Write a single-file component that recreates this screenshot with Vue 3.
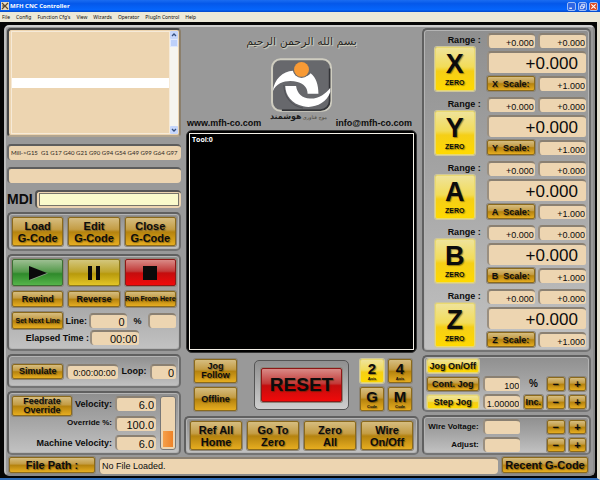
<script setup>
import { reactive, ref } from 'vue'

const menus = ['File', 'Config', "Function Cfg's", 'View', 'Wizards', 'Operator', 'PlugIn Control', 'Help']
const modalCodes = 'Mill->G15  G1 G17 G40 G21 G90 G94 G54 G49 G99 G64 G97'
const mdi = ref('')

const axes = reactive(
  ['X', 'Y', 'A', 'B', 'Z'].map((name) => ({
    name,
    low: '+0.000',
    high: '+0.000',
    position: '+0.000',
    scale: '+1.000',
  }))
)

const run = reactive({ line: '0', percent: '', elapsed: '00:00', simulated: '0:00:00:00', loop: '0' })
const feed = reactive({ velocity: '6.0', override: '100.0', machine: '6.0', level: 34 })
const jog = reactive({ continuous: '100', step: '1.00000' })
const wire = reactive({ voltage: '', adjust: '' })

const modes = [
  { key: '2', caption: 'Axis', active: true },
  { key: '4', caption: 'Axis', active: false },
  { key: 'G', caption: 'Code', active: false },
  { key: 'M', caption: 'Code', active: false },
]
const actions = [
  ['Ref All', 'Home'],
  ['Go To', 'Zero'],
  ['Zero', 'All'],
  ['Wire', 'On/Off'],
]
const files = ['Load', 'Edit', 'Close']

function zero(axis) {
  axis.position = '+0.000'
}
</script>

<template>
  <div class="window">
    <header class="titlebar">
      <svg class="app-icon" viewBox="0 0 8 8" aria-hidden="true">
        <rect width="8" height="8" fill="#e9dcc0" />
        <path d="M1 1l6 6M7 1L1 7M1 4h3" stroke="#5b4a30" stroke-width="1.2" />
      </svg>
      <h1 class="title">MFH CNC Controller</h1>
      <div class="window-buttons">
        <button class="win" type="button" aria-label="Minimize">
          <svg viewBox="0 0 8 8"><path d="M1.5 6h3" stroke="#fff" stroke-width="1.4" /></svg>
        </button>
        <button class="win" type="button" aria-label="Restore">
          <svg viewBox="0 0 8 8"><path d="M3 3V1.5h3.500V5H5M1.500 3.500H5v3H1.500z" fill="none" stroke="#fff" stroke-width="0.900" /></svg>
        </button>
        <button class="win close" type="button" aria-label="Close">
          <svg viewBox="0 0 8 8"><path d="M1.500 1.500l5 5M6.500 1.500l-5 5" stroke="#fff" stroke-width="1.300" /></svg>
        </button>
      </div>
    </header>
    <nav class="menubar">
      <button v-for="m in menus" :key="m" type="button" class="menu">{{ m }}</button>
    </nav>

    <div class="frame">
      <div class="console">
        <main class="columns">
          <section class="column left">
            <div class="listing">
              <div class="code">
                <div class="current-line"></div>
              </div>
              <div class="scrollbar">
                <button class="arrow" type="button" aria-label="Scroll up">
                  <svg viewBox="0 0 8 8"><path d="M2 5l2-2 2 2" fill="none" stroke="#35507f" stroke-width="1.300" /></svg>
                </button>
                <div class="thumb"></div>
                <button class="arrow down" type="button" aria-label="Scroll down">
                  <svg viewBox="0 0 8 8"><path d="M2 3l2 2 2-2" fill="none" stroke="#35507f" stroke-width="1.300" /></svg>
                </button>
              </div>
            </div>
            <div class="strip">{{ modalCodes }}</div>
            <div class="strip"></div>
            <div class="mdi">
              <label for="mdi">MDI</label>
              <div class="mdi-box"><input id="mdi" v-model="mdi" type="text" /></div>
            </div>

            <div class="panels">
              <div class="panel three">
                <button v-for="f in files" :key="f" type="button" class="btn tall">{{ f }}<br />G-Code</button>
              </div>

              <div class="panel run">
                <div class="three big">
                  <button type="button" class="btn green" aria-label="Cycle start">
                    <svg viewBox="0 0 20 16"><path d="M2 2l18 6.500-18 7z" fill="#8aa387" /><path d="M1 1l18 7-18 7z" fill="#0a0a0a" /></svg>
                  </button>
                  <button type="button" class="btn yellow" aria-label="Pause">
                    <svg viewBox="0 0 20 16"><path d="M4 1h4v14H4zM12 1h4v14h-4z" fill="#0a0a0a" /></svg>
                  </button>
                  <button type="button" class="btn red" aria-label="Stop">
                    <svg viewBox="0 0 20 16"><path d="M3 1h14v14H3z" fill="#0a0a0a" /></svg>
                  </button>
                </div>
                <div class="three small">
                  <button type="button" class="btn">Rewind</button>
                  <button type="button" class="btn">Reverse</button>
                  <button type="button" class="btn long">Run From Here</button>
                </div>
                <div class="line-row">
                  <button type="button" class="btn long">Set Next Line</button>
                  <label for="line">Line:</label>
                  <input id="line" v-model="run.line" class="field mid" type="text" />
                  <label for="percent" class="percent">%</label>
                  <input id="percent" v-model="run.percent" class="field" type="text" />
                </div>
                <div class="elapsed-row">
                  <label for="elapsed">Elapsed Time :</label>
                  <input id="elapsed" v-model="run.elapsed" class="field mid" type="text" readonly />
                </div>
              </div>

              <div class="panel sim">
                <button type="button" class="btn">Simulate</button>
                <input v-model="run.simulated" class="field" type="text" aria-label="Simulated time" readonly />
                <label for="loop">Loop:</label>
                <input id="loop" v-model="run.loop" class="field mid" type="text" />
              </div>

              <div class="panel feed">
                <div class="feed-rows">
                  <div class="feed-row">
                    <button type="button" class="btn feedrate">Feedrate<br />Override</button>
                    <label for="velocity">Velocity:</label>
                    <input id="velocity" v-model="feed.velocity" class="field mid" type="text" />
                  </div>
                  <div class="feed-row">
                    <label for="override" class="minor">Override %:</label>
                    <input id="override" v-model="feed.override" class="field mid" type="text" />
                  </div>
                  <div class="feed-row">
                    <label for="machine">Machine Velocity:</label>
                    <input id="machine" v-model="feed.machine" class="field mid" type="text" />
                  </div>
                </div>
                <div class="gauge" role="meter" aria-label="Feedrate" :aria-valuenow="feed.level">
                  <div class="level" :style="{ height: feed.level + '%' }"></div>
                </div>
              </div>
            </div>
          </section>

          <section class="column center">
            <div class="brand">
              <p class="calligraphy" lang="ar" dir="rtl">بسم الله الرحمن الرحيم</p>
              <svg class="logo" viewBox="0 0 180 158" role="img" aria-label="MFH">
                <rect x="3" y="3" width="174" height="152" rx="25" fill="#67686c" stroke="#cfcdc0" stroke-width="6" />
                <path d="M173 30v96a27 27 0 0 1-27 27H32" fill="none" stroke="#333438" stroke-width="5" />
                <path d="M5 98C10 62 34 38 65 37c8 22 38 24 52 7 16 12 23 34 23 61h-32c0-18-10-29-30-35C54 63 18 67 5 98z" fill="#fff" />
                <path d="M42 82h32c3 22 18 36 41 37 26 1 46-14 60-32v13c-12 34-48 49-80 42-34-8-52-31-53-60z" fill="#fff" />
                <path d="M38 79c0 34 21 61 56 68" fill="none" stroke="#505156" stroke-width="3" />
                <circle cx="90" cy="33" r="25" fill="#67686c" />
                <circle cx="90" cy="33" r="22" fill="#f89a35" />
              </svg>
              <div class="contacts">
                <a href="#">www.mfh-co.com</a>
                <p class="caption" lang="fa" dir="rtl"><small>موج فناوری</small><b>هوشمند</b></p>
                <a href="#">info@mfh-co.com</a>
              </div>
            </div>

            <div class="screen"><div class="viewport">Tool:0</div></div>

            <div class="controls">
              <div class="stack">
                <button type="button" class="btn">Jog<br />Follow</button>
                <button type="button" class="btn">Offline</button>
              </div>
              <div class="reset-panel">
                <button type="button" class="btn red reset">RESET</button>
              </div>
              <div class="modes">
                <button v-for="m in modes" :key="m.key" type="button" class="btn mode" :class="{ lit: m.active }">
                  {{ m.key }}<small>{{ m.caption }}</small>
                </button>
              </div>
            </div>

            <div class="panel four">
              <button v-for="a in actions" :key="a.join()" type="button" class="btn tall">{{ a[0] }}<br />{{ a[1] }}</button>
            </div>
          </section>

          <section class="column right">
            <div class="panel axes">
              <div v-for="a in axes" :key="a.name" class="axis">
                <div class="axis-side">
                  <span class="range">Range :</span>
                  <button type="button" class="btn lit zero" @click="zero(a)">{{ a.name }}<small>ZERO</small></button>
                </div>
                <div class="readouts">
                  <input v-model="a.low" class="field low" type="text" :aria-label="a.name + ' range low'" />
                  <input v-model="a.high" class="field low" type="text" :aria-label="a.name + ' range high'" />
                  <input v-model="a.position" class="field dro" type="text" :aria-label="a.name + ' position'" />
                  <button type="button" class="btn scale">{{ a.name }}&nbsp; Scale:</button>
                  <input v-model="a.scale" class="field low" type="text" :aria-label="a.name + ' scale'" />
                </div>
              </div>
            </div>

            <div class="panel jog">
              <button type="button" class="btn lit start">Jog On/Off</button>
              <button type="button" class="btn start">Cont. Jog</button>
              <input v-model="jog.continuous" class="field low" type="text" aria-label="Continuous jog rate" />
              <span class="unit">%</span>
              <button type="button" class="btn step minus" aria-label="Decrease rate">−</button>
              <button type="button" class="btn step" aria-label="Increase rate">+</button>
              <button type="button" class="btn lit start">Step Jog</button>
              <input v-model="jog.step" class="field low" type="text" aria-label="Jog step" />
              <button type="button" class="btn inc">Inc.</button>
              <button type="button" class="btn step minus" aria-label="Decrease step">−</button>
              <button type="button" class="btn step" aria-label="Increase step">+</button>
            </div>

            <div class="panel jog wire">
              <label for="voltage" class="start">Wire Voltage:</label>
              <input id="voltage" v-model="wire.voltage" class="field" type="text" />
              <button type="button" class="btn step minus" aria-label="Decrease voltage">−</button>
              <button type="button" class="btn step" aria-label="Increase voltage">+</button>
              <label for="adjust" class="start">Adjust:</label>
              <input id="adjust" v-model="wire.adjust" class="field" type="text" />
              <button type="button" class="btn step minus" aria-label="Decrease adjustment">−</button>
              <button type="button" class="btn step" aria-label="Increase adjustment">+</button>
            </div>
          </section>
        </main>

        <footer class="footer">
          <button type="button" class="btn wide">File Path :</button>
          <div class="path">No File Loaded.</div>
          <button type="button" class="btn wide">Recent G-Code</button>
        </footer>
      </div>
    </div>
  </div>
</template>

<style>
body {
  margin: 0;
  background: #000;
}
</style>

<style scoped>
* {
  box-sizing: border-box;
}
.window {
  display: flex;
  flex-direction: column;
  min-height: 100vh;
  font-family: "Liberation Sans", Arial, sans-serif;
  font-size: 9px;
  line-height: 10px;
  color: #0c0c0c;
}
p,
h1 {
  margin: 0;
}
button,
input {
  margin: 0;
  padding: 0;
  font: inherit;
  color: inherit;
  min-width: 0;
}
label,
.range,
.unit {
  font-weight: bold;
  white-space: nowrap;
}

/* window chrome */
.titlebar {
  display: flex;
  align-items: center;
  height: 12px;
  padding: 0 2px 0 1px;
  background: linear-gradient(#1b6cf0, #0458ea 30%, #0665fb 80%, #0448c8);
}
.app-icon {
  width: 8px;
  height: 8px;
}
.title {
  flex: 1;
  margin-left: 1px;
  font: bold 6px/12px "Open Sans", sans-serif;
  color: #fff;
}
.window-buttons {
  display: flex;
  gap: 2px;
}
.win {
  width: 9px;
  height: 9px;
  border: 1px solid #9dbcf5;
  border-radius: 2px;
  background: #2f66e4;
}
.win svg,
.arrow svg {
  display: block;
  width: 100%;
  height: 100%;
}
.win.close {
  background: #dd4a24;
}
.menubar {
  display: flex;
  gap: 6px;
  height: 10px;
  padding: 0 2px;
  background: #ece9d8;
}
.menu {
  border: 0;
  background: none;
  font: 5px/9px "Noto Sans", sans-serif;
}

/* outer console */
.frame {
  flex: 1;
  display: flex;
  padding: 3px 2px 2px 4px;
  background: #050505;
  border-right: 3px solid #e4e1d2;
  border-bottom: 2px solid #2f6bb5;
}
.console {
  flex: 1;
  display: flex;
  flex-direction: column;
  gap: 1px;
  padding: 1px 2px 0 1px;
  border: 2px solid #8a8a8a;
  border-top-color: #cfcfcf;
  border-left-color: #bdbdbd;
  border-radius: 5px;
  background: #999;
}
.columns {
  flex: 1;
  display: grid;
  grid-template-columns: 174fr 235fr 169fr;
  column-gap: 3px;
}
.column {
  display: flex;
  flex-direction: column;
  min-width: 0;
}
.panels,
.right {
  gap: 3px;
}
.panels {
  display: flex;
  flex-direction: column;
  margin-top: -3px;
}
.panel {
  border: 2px solid #606060;
  border-right-color: #6c6c6c;
  border-bottom-color: #747474;
  border-radius: 5px;
  background: linear-gradient(#8f8f8f, #a4a4a4 45%, #c2c2c2);
  box-shadow: inset 0 0 0 1px #b4b4b4;
}

/* buttons */
.btn {
  display: flex;
  align-items: center;
  justify-content: center;
  border: 1px solid #8b6a1c;
  border-radius: 2px;
  background: linear-gradient(#d6bd80, #c49d45 42%, #b5830f 52%, #e6ad20);
  box-shadow: 0 0 0 1px #8b8478;
  font-weight: bold;
  text-align: center;
  text-shadow: 1px 1px 1px rgba(60, 40, 0, 0.5);
  white-space: nowrap;
}
.tall {
  height: 29px;
  font-size: 11px;
  line-height: 12px;
}
.lit {
  border-color: #e9d970;
  background: linear-gradient(#efe39a, #f2dc58 45%, #f5cf17 55%, #ffd900);
  box-shadow: 0 0 0 1px #cfc79a;
}
.long {
  font-size: 7px;
}
.green {
  border-color: #3c6e33;
  background: linear-gradient(#9dbf92, #549a4b 48%, #2f8a2b 55%, #55b44a);
}
.yellow {
  border-color: #8d7a18;
  background: linear-gradient(#d3c67c, #bfa52c 48%, #b89a0c 55%, #e3c526);
}
.red {
  border-color: #8e1717;
  background: linear-gradient(#d98a86, #c23a38 45%, #c40d0d 52%, #f00a0a);
}

/* fields */
.field {
  display: block;
  width: 100%;
  height: 15px;
  padding: 1px 2px 0 0;
  border: 0;
  border-top: 2px solid #8a8072;
  border-left: 2px solid #9a8f80;
  border-radius: 4px 4px 2px 4px;
  background: #edd5b1;
  text-align: right;
}
.mid {
  font-size: 11px;
}
.low {
  padding: 3px 1px 0 0;
}

/* left column */
.left {
  gap: 7px;
}
.listing {
  flex: 1;
  display: flex;
  min-height: 60px;
  padding: 1px 1px 1px 2px;
  border: 2px solid #464646;
  border-right-color: #8b7f6c;
  border-bottom-color: #b3a58f;
  border-radius: 4px;
  background: #edd5b1;
}
.code {
  flex: 1;
  display: flex;
  flex-direction: column;
  justify-content: center;
  border: 1px solid #f6ead8;
}
.current-line {
  height: 10px;
  background: #fff;
}
.scrollbar {
  display: flex;
  flex-direction: column;
  width: 8px;
  background: #f6f5f0;
}
.arrow {
  height: 8px;
  border: 0;
  border-radius: 1px;
  background: #c6d6fb;
}
.arrow.down {
  margin-top: auto;
}
.thumb {
  height: 8px;
  background: #bdd0fa;
  border: 1px solid #dfe8fd;
}
.strip {
  height: 16px;
  padding: 1px 2px;
  border-top: 2px solid #5d5d5d;
  border-left: 2px solid #6d6d6d;
  border-radius: 4px;
  background: #edd5b1;
  font: 6px/12px Lato, "Liberation Sans", sans-serif;
  color: #2c261e;
  white-space: pre;
}
.mdi {
  display: flex;
  align-items: center;
  gap: 2px;
}
.mdi label {
  font-size: 14px;
  line-height: 18px;
}
.mdi-box {
  flex: 1;
  display: flex;
  height: 18px;
  padding: 1px 2px 2px;
  border-top: 2px solid #555;
  border-left: 2px solid #555;
  border-radius: 4px;
  background: #edd5b1;
}
.mdi-box input {
  flex: 1;
  border: 1px solid #77756a;
  background: #fafacb;
}
.three {
  display: grid;
  grid-template-columns: repeat(3, 1fr);
  gap: 5px;
}
.panel.three {
  padding: 3px;
}
.run {
  display: flex;
  flex-direction: column;
  gap: 5px;
  height: 97px;
  padding: 3px;
}
.big .btn {
  height: 27px;
}
.big svg {
  width: 20px;
  height: 16px;
}
.small .btn {
  height: 16px;
}
.line-row {
  display: grid;
  grid-template-columns: 52fr 24fr 38fr 20fr 28fr;
  align-items: center;
  gap: 1px;
}
.line-row .btn {
  height: 17px;
}
.line-row label {
  text-align: center;
}
.elapsed-row {
  display: grid;
  grid-template-columns: 78fr 50fr 36fr;
  align-items: center;
  gap: 1px;
  margin-top: -4px;
}
.elapsed-row label,
.feed label {
  text-align: right;
}
.sim {
  display: grid;
  grid-template-columns: 52fr 52fr 27fr 26fr;
  align-items: center;
  gap: 3px;
  height: 34px;
  padding: 0 3px;
}
.sim .btn {
  height: 15px;
}
.sim label {
  text-align: center;
}
.feed {
  display: flex;
  gap: 4px;
  height: 64px;
  padding: 3px;
}
.feed-rows {
  flex: 1;
  display: flex;
  flex-direction: column;
  justify-content: space-between;
}
.feed-row {
  display: flex;
  align-items: center;
  justify-content: flex-end;
  gap: 3px;
}
.feed-row .field {
  width: 41px;
}
.feed-row label {
  flex: 1;
}
.feedrate {
  width: 60px;
  height: 20px;
  line-height: 9px;
  margin-bottom: -5px;
}
.minor {
  font-size: 8px;
}
.gauge {
  display: flex;
  align-items: flex-end;
  width: 16px;
  padding: 2px;
  border: 1px solid #777;
  border-radius: 3px;
  background: #edd5b1;
}
.level {
  flex: 1;
  background: linear-gradient(90deg, #f5a04a, #ee8228);
}

/* center column */
.brand {
  display: flex;
  flex-direction: column;
  align-items: center;
  height: 102px;
}
.calligraphy {
  height: 30px;
  font: 11px/28px "DejaVu Sans", sans-serif;
  color: #23231f;
  text-shadow: 0 0 1px #dcdac6, 1px 1px 1px #dcdac6;
  white-space: nowrap;
}
.logo {
  width: 61px;
  height: 54px;
}
.contacts {
  align-self: stretch;
  flex: 1;
  display: flex;
  justify-content: space-between;
  align-items: flex-end;
  padding: 0 7px 2px 3px;
}
.contacts a {
  color: inherit;
  font-weight: bold;
  text-decoration: none;
}
.caption {
  align-self: flex-start;
  display: flex;
  align-items: center;
  gap: 1px;
  font: 8px/10px "DejaVu Sans", sans-serif;
  color: #1c1c1c;
}
.caption small {
  font-size: 5px;
  color: #4a463a;
}
.screen {
  flex: 1;
  display: flex;
  min-height: 120px;
  margin: 0 2px;
  padding: 2px;
  border: 1px solid #333;
  border-radius: 6px;
  background: #000;
}
.viewport {
  flex: 1;
  padding: 2px;
  border: 1px solid #f3efe6;
  color: #fff;
  font: bold 7px/8px "Open Sans", sans-serif;
}
.controls {
  display: flex;
  align-items: center;
  padding: 6px 7px 5px 10px;
}
.stack {
  display: grid;
  gap: 4px;
  width: 43px;
}
.stack .btn {
  height: 24px;
  line-height: 9px;
}
.reset-panel {
  display: flex;
  width: 95px;
  height: 50px;
  margin: 0 11px 0 auto;
  padding: 7px 6px;
  border: 1px solid #555;
  border-radius: 5px;
  background: linear-gradient(#8f8f8f, #cfcfcf);
}
.reset {
  flex: 1;
  font-size: 19px;
}
.modes {
  display: grid;
  grid-template-columns: 24px 24px;
  gap: 4px;
}
.mode {
  flex-direction: column;
  height: 24px;
  font-size: 15px;
  line-height: 14px;
}
.mode small {
  font-size: 4px;
  line-height: 5px;
}
.four {
  display: grid;
  grid-template-columns: repeat(4, 1fr);
  gap: 5px;
  padding: 3px 4px;
}

/* right column */
.axes {
  flex: 1;
  display: flex;
  flex-direction: column;
  justify-content: space-between;
  gap: 4px;
  padding: 3px;
}
.axis {
  display: grid;
  grid-template-columns: 54fr 100fr;
  gap: 6px;
}
.axis-side {
  display: flex;
  flex-direction: column;
}
.range {
  height: 14px;
  line-height: 15px;
  text-align: right;
}
.zero {
  flex-direction: column;
  flex: 1;
  margin: 0 6px 0 8px;
  font-size: 27px;
  line-height: 28px;
}
.zero small {
  font-size: 7px;
  line-height: 10px;
}
.readouts {
  display: grid;
  grid-template-columns: 1fr 1fr;
  gap: 3px;
}
.dro {
  grid-column: 1 / -1;
  height: 22px;
  padding-right: 8px;
  font-size: 17px;
}
.jog {
  display: grid;
  grid-template-columns: 51fr 37fr 18fr 18fr 17fr;
  align-items: center;
  gap: 3px 4px;
  height: 57px;
  padding: 2px 3px;
}
.jog .btn {
  height: 14px;
}
.start {
  grid-column: 1;
}
.unit {
  text-align: center;
  font-size: 10px;
}
.jog .step {
  font-size: 11px;
  line-height: 10px;
}
.minus {
  grid-column: 4;
}
.inc {
  font-size: 9px;
}
.wire {
  height: 40px;
}
.wire label {
  font-size: 8px;
  text-align: right;
}

/* footer */
.footer {
  display: flex;
  gap: 4px;
  padding: 1px 3px 0 2px;
}
.footer .btn {
  width: 86px;
  height: 16px;
  font-size: 11px;
}
.path {
  flex: 1;
  height: 17px;
  padding: 0 2px;
  border-top: 2px solid #8a8072;
  border-left: 1px solid #8a8072;
  border-radius: 4px;
  background: #edd5b1;
  line-height: 14px;
}
</style>
